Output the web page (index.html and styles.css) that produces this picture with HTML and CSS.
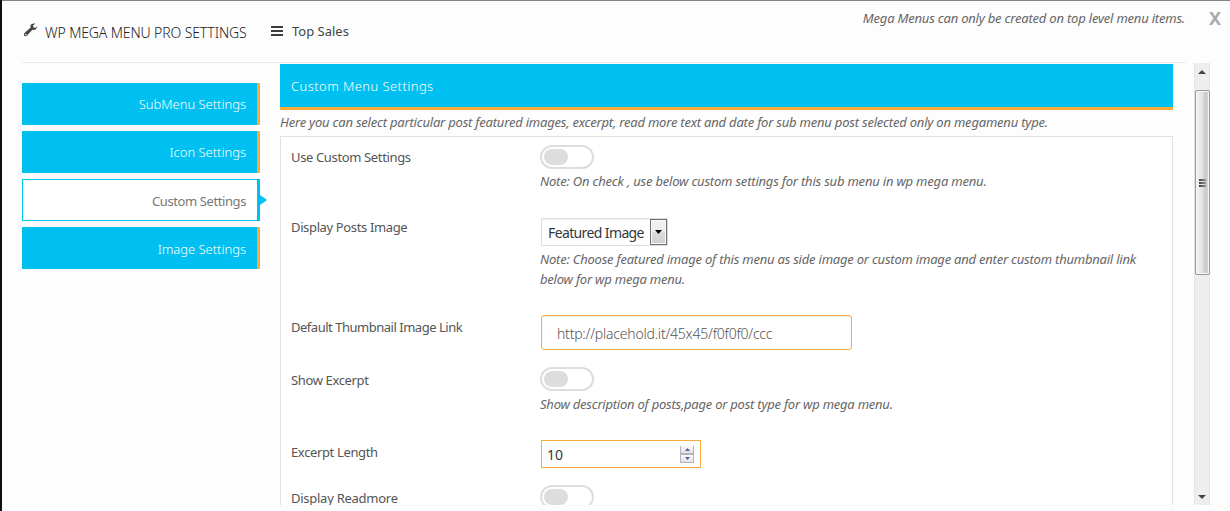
FILE: index.html
```html
<!DOCTYPE html>
<html lang="en">
<head>
<meta charset="utf-8">
<title>WP Mega Menu Pro Settings</title>
<link rel="stylesheet" href="styles.css">
</head>
<body>
<div class="modal">
  <header class="header">
    <div class="brand">
      <svg class="wrench" viewBox="0 0 14 14" width="14" height="14"><path d="M13.300 3.400 11.200 5 9.300 4.300 9 2.500 11.200.7C9.600 0 7.300.6 6.600 2.400c-.3.8-.2 1.500.1 2.200L.8 9.700c-1 .9-1.200 2.200-.5 3 .8.800 2.100.7 3-.4l5-5.500c2 .6 4.700-.600 5-3.400zM1.500 12.200a.7.7 0 1 1 .9-1 .7.7 0 0 1-.9 1z"/></svg>
      <span class="brand-text">WP MEGA MENU PRO SETTINGS</span>
    </div>
    <div class="item">
      <svg class="bars" viewBox="0 0 12 10" width="12" height="10"><path d="M0 0h12v2H0zM0 4h12v2H0zM0 8h12v2H0z"/></svg>
      <span class="item-text">Top Sales</span>
    </div>
    <em class="hint">Mega Menus can only be created on top level menu items.</em>
    <span class="close">X</span>
  </header>
  <div class="main">
    <nav class="tabs">
      <a class="tab">SubMenu Settings</a>
      <a class="tab">Icon Settings</a>
      <a class="tab active">Custom Settings</a>
      <a class="tab">Image Settings</a>
    </nav>
    <section class="content">
      <h2 class="title"><span>Custom Menu Settings</span></h2>
      <p class="intro"><em>Here you can select particular post featured images, excerpt, read more text and date for sub menu post selected only on megamenu type.</em></p>
      <div class="form">
        <div class="row row-custom">
          <label class="label">Use Custom Settings</label>
          <div><div class="toggle"></div><p class="note">Note: On check , use below custom settings for this sub menu in wp mega menu.</p></div>
        </div>
        <div class="row row-image">
          <label class="label">Display Posts Image</label>
          <div>
            <div class="select"><span class="select-text">Featured Image</span><span class="select-btn"><svg viewBox="0 0 7 4" width="7" height="4"><path d="M0 0h7L3.500 4z"/></svg></span></div>
            <p class="note">Note: Choose featured image of this menu as side image or custom image and enter custom thumbnail link<br>below for wp mega menu.</p>
          </div>
        </div>
        <div class="row row-link">
          <label class="label">Default Thumbnail Image Link</label>
          <div class="input"><span>http://placehold.it/45x45/f0f0f0/ccc</span></div>
        </div>
        <div class="row row-excerpt">
          <label class="label">Show Excerpt</label>
          <div><div class="toggle"></div><p class="note">Show description of posts,page or post type for wp mega menu.</p></div>
        </div>
        <div class="row row-length">
          <label class="label">Excerpt Length</label>
          <div class="number"><span>10</span>
            <div class="spin"><span class="spin-btn"><svg viewBox="0 0 5 3" width="5" height="3"><path d="M0 3h5L2.500 0z"/></svg></span><span class="spin-btn"><svg viewBox="0 0 5 3" width="5" height="3"><path d="M0 0h5L2.500 3z"/></svg></span></div>
          </div>
        </div>
        <div class="row row-more">
          <label class="label">Display Readmore</label>
          <div class="toggle"></div>
        </div>
      </div>
    </section>
    <div class="scrollbar">
      <svg class="arrow" viewBox="0 0 8 4" width="8" height="4"><path d="M0 4h8L4 0z"/></svg>
      <div class="thumb"><i></i><i></i><i></i></div>
      <svg class="arrow down" viewBox="0 0 8 4" width="8" height="4"><path d="M0 0h8L4 4z"/></svg>
    </div>
  </div>
</div>
</body>
</html>
```
FILE: styles.css
```css
* { box-sizing: border-box; }
body { margin: 0; width: 1230px; height: 511px; overflow: hidden; background: #0b1013; padding-left: 2px; font-family: "Noto Sans", "Open Sans", sans-serif; font-size: 13px; color: #555; }
p, h2 { margin: 0; font-weight: 400; }
.modal { height: 511px; background: #fdfdfd; border-top: 1px solid #838383; padding-left: 20px; }
.header { display: flex; align-items: flex-start; height: 62px; width: 1208px; background: linear-gradient(#ececec, #ececec) 0 61px / 1164px 1px no-repeat; color: #444; white-space: nowrap; }
.brand { display: flex; width: 248px; padding: 22px 0 0 2px; }
.wrench { margin-right: 7px; fill: #444; }
.brand-text { line-height: 20px; font-size: 14px; letter-spacing: -.12px; font-weight: 300; color: #222; }
.item { display: flex; align-items: center; height: 20px; margin-top: 20px; gap: 9px; padding-left: 1px; width: 300px; }
.bars { fill: #3c3c3c; }
.item-text { font-size: 13px; }
.hint { margin-left: auto; padding-right: 24px; line-height: 20px; margin-top: 7px; font-size: 13px; letter-spacing: -.2px; color: #666; }
.close { font-weight: 700; font-size: 18px; line-height: 20px; color: #aaa; margin-top: 7px; width: 21px; }
.main { display: flex; height: 442px; overflow: hidden; }
.tabs { width: 238px; height: 424px; padding-top: 20px; display: flex; flex-direction: column; gap: 6px; flex: none; background: #fefefe; }
.tab { position: relative; height: 42px; line-height: 42px; background: #00c0f1; border-right: 3px solid #f9ac38; color: #fff; text-align: right; padding-right: 11px; letter-spacing: -.03px; font-weight: 300; }
.tab:last-child { line-height: 44px; }
.tab.active { background: #fff; border: 1px solid #00c0f1; border-right-width: 3px; color: #777; font-weight: 400; letter-spacing: -.4px; }
.tab.active::after { content: ""; position: absolute; right: -10px; top: 15px; border: 5px solid transparent; border-left: 7px solid #00c0f1; border-right: 0; }
.content { width: 893px; margin-left: 20px; padding-top: 1px; flex: none; }
.title { height: 46px; line-height: 45px; background: #00c0f1; border-bottom: 3px solid #f9ac38; color: #fff; padding-left: 11px; font-size: 13px; letter-spacing: .42px; font-weight: 300; }
.intro { height: 26px; line-height: 24px; white-space: nowrap; color: #666; letter-spacing: -.205px; }
.form { height: 380px; border: 1px solid #e1e1e1; background: #fff; padding: 8px 0 0 10px; }
.row { display: grid; grid-template-columns: 249px 1fr; align-items: start; }
.row-custom { height: 72px; }
.row-image { height: 98px; }
.row-link { height: 52px; }
.row-excerpt { height: 73px; }
.row-length { height: 45px; }
.label { line-height: 20px; padding-top: 2px; white-space: nowrap; letter-spacing: -.36px; }
.row-image .label { padding-top: 0; }
.row-link .label { letter-spacing: -.48px; }
.row-excerpt .label, .row-more .label { padding-top: 3px; }
.row-more .label { line-height: 18px; padding-top: 4px; letter-spacing: -.26px; }
.toggle { width: 54px; height: 24px; border: 2px solid #ddd; border-radius: 12px; padding: 2px; background: #fff; }
.toggle::before { content: ""; display: block; width: 24px; height: 16px; border-radius: 8px; background: #ddd; }
.note { line-height: 20px; font-style: italic; color: #666; white-space: nowrap; padding-top: 2px; letter-spacing: -.2px; }
.row-image .note { padding-top: 3px; letter-spacing: -.215px; }
.row-excerpt .note { padding-top: 3px; letter-spacing: -.23px; }
.select { display: flex; margin: 1px 0 0 1px; width: 127px; height: 28px; border: 1px solid #ddd; background: #fff; box-shadow: inset 0 1px 2px rgba(0,0,0,.06); color: #32373c; }
.select-text { width: 108px; padding-left: 6px; line-height: 28px; white-space: nowrap; font-size: 14px; letter-spacing: -.62px; }
.select-btn { width: 17px; height: 26px; border: 1px solid #707070; box-shadow: inset 0 0 0 1px #fafafa; background: linear-gradient(#f2f2f2, #ebebeb 49%, #ddd 50%, #cfcfcf); display: flex; align-items: center; justify-content: center; }
.input { margin-left: 1px; width: 311px; height: 35px; border: 1px solid #f5ae3c; border-radius: 3px; box-shadow: inset 0 1px 2px rgba(0,0,0,.07); padding-left: 15px; line-height: 35px; color: #555; font-size: 14px; letter-spacing: -.22px; font-weight: 300; }
.number { margin-left: 1px; width: 160px; height: 28px; border: 1px solid #f5ae3c; display: flex; justify-content: space-between; padding: 0 6px 0 5px; line-height: 28px; color: #32373c; font-size: 14px; }
.spin { width: 14px; height: 17px; margin-top: 5px; display: grid; grid-template-rows: 8px 8px; gap: 1px; background: #b4b4b8; }
.spin-btn { display: flex; align-items: center; justify-content: center; background: linear-gradient(#fafafa, #e2e2e4); border: 1px solid #b4b4b8; border-top: 0; fill: #4d64ab; }
.scrollbar { width: 16px; height: 442px; margin-left: 21px; background: #eee; border: solid #e5e5e5; border-width: 0 1px; display: flex; flex-direction: column; align-items: center; flex: none; }
.arrow { margin: 7px 0 16px; fill: #444; flex: none; }
.arrow.down { margin: auto 0 6px; }
.thumb { width: 15px; height: 185px; border: 1px solid #999; border-radius: 2px; box-shadow: inset 0 0 0 1px #f7f7f7; background: linear-gradient(90deg, #f4f4f4, #e2e2e4 48%, #c8c8cb 75%, #dcdcdd); display: flex; flex-direction: column; align-items: center; justify-content: center; gap: 1px; flex: none; }
.thumb i { width: 7px; height: 2px; background: linear-gradient(90deg, #444, #999); }
```
